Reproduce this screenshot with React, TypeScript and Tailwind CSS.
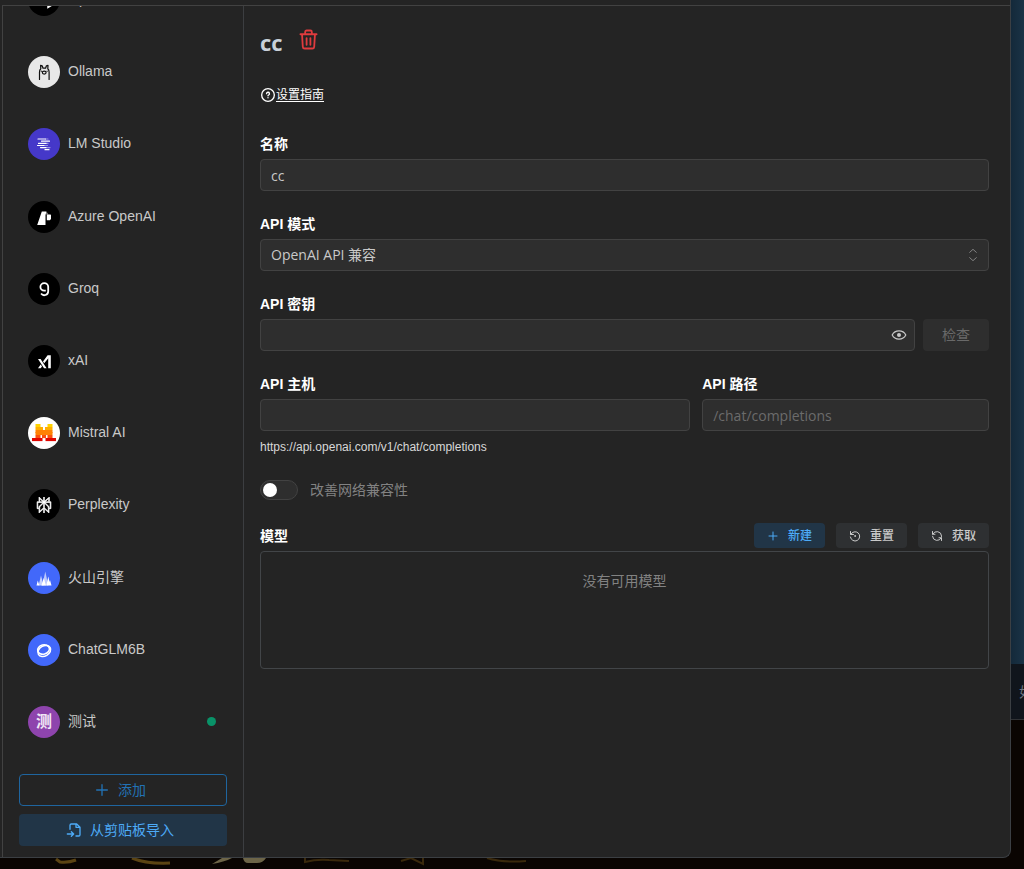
import type { ReactNode } from 'react';
import { SiPerplexity } from 'react-icons/si';

const UI_FONT = "font-['Open_Sans','Noto_Sans_CJK_SC',sans-serif]";
const FIELD =
  "h-8 w-full rounded border border-[#424242] bg-[#2e2e2e] px-2.5 text-sm text-[#c9c9c9] placeholder:text-[#6b6b6b] outline-none focus:border-[#1971c2] font-['Open_Sans','Noto_Sans_CJK_SC',sans-serif]";

type IconProps = { className?: string; children: ReactNode; strokeWidth?: number };

function Stroke({ className, children, strokeWidth = 2 }: IconProps) {
  return (
    <svg
      viewBox="0 0 24 24"
      fill="none"
      stroke="currentColor"
      strokeWidth={strokeWidth}
      strokeLinecap="round"
      strokeLinejoin="round"
      className={className}
      aria-hidden="true"
    >
      {children}
    </svg>
  );
}

const PlusIcon = ({ className }: { className?: string }) => (
  <Stroke className={className}>
    <path d="M12 4v16M4 12h16" />
  </Stroke>
);

function Glyph({ children }: { children: ReactNode }) {
  return (
    <svg viewBox="0 0 32 32" className="size-8" aria-hidden="true">
      {children}
    </svg>
  );
}

const OllamaGlyph = () => (
  <Glyph>
    <g fill="none" stroke="#111" strokeWidth="1.2" strokeLinecap="round" strokeLinejoin="round">
      <path d="M11.500 23.500v-7.500q0-2 1.300-3.200L12.600 9.400l1.600.4.800 2.400h2.600l.8-2.400 1.600-.4-.2 3.400q1.300 1.200 1.300 3.200v7.500" />
      <ellipse cx="16.200" cy="16.600" rx="1.900" ry="1.500" />
      <path d="M13.300 15.200v.1M19.100 15.200v.1" />
    </g>
  </Glyph>
);

const LmStudioGlyph = () => (
  <Glyph>
    <g stroke="#fff" strokeWidth="1.200" strokeLinecap="round">
      <path d="M10 11h7.500M13.500 13.200h8M10.500 15.400h7.500M9.500 17.500h6.500M12.500 19.600h5.500M17 21.700h4" />
      <path d="M17.500 11h2.500M18 15.400h2M16 17.500h3.500M18 19.600h4" opacity=".45" />
    </g>
  </Glyph>
);

const AzureGlyph = () => (
  <Glyph>
    <path d="M13.800 10.500h4.600l-.9 3.500v10H9.200z" fill="#fff" />
    <path d="M18.400 10.500l2.200 3h-3.100z" fill="#fff" opacity=".5" />
    <path d="M18.800 13.500h3.200c.6 0 1 .4 1 1v3.400l-1.200 1.300h-3z" fill="#fff" />
  </Glyph>
);

const GroqGlyph = () => (
  <Glyph>
    <path
      d="M20.200 13.800v4.400a3.900 3.900 0 0 1-7.100 2.300M20.200 13.800a3.900 3.700 0 1 0-3.900 3.800h1.500"
      fill="none"
      stroke="#fff"
      strokeWidth="1.800"
    />
  </Glyph>
);

const XaiGlyph = () => (
  <Glyph>
    <path
      d="M10 14h2.600l6 9.300H16zM22.800 10.200v13.100h-2.600V13.600zM10 23.300l2.700-3.900 1.300 2-1.300 1.900zM15 16.500l4.600-6.300h3.200L16.200 18.300z"
      fill="#fff"
    />
  </Glyph>
);

const MISTRAL_ROWS: [string, number, number, number][] = [
  ['#ffd400', 7.5, 7, 5],
  ['#ffd400', 19.5, 7, 5],
  ['#ffaf00', 7.5, 10, 7.5],
  ['#ffaf00', 17, 10, 7.5],
  ['#ff8205', 7.5, 13, 17],
  ['#ff8205', 7.5, 15, 17],
  ['#fa500f', 7.5, 18, 5],
  ['#fa500f', 14, 18, 4],
  ['#fa500f', 19.5, 18, 5],
  ['#e10500', 4, 21, 10.5],
  ['#e10500', 17.5, 21, 10.5],
];

const MistralGlyph = () => (
  <Glyph>
    {MISTRAL_ROWS.map(([fill, x, y, width]) => (
      <rect key={`${x}-${y}`} x={x} y={y} width={width} height="3.1" fill={fill} />
    ))}
  </Glyph>
);

const VolcanoGlyph = () => (
  <Glyph>
    <path d="M17.300 9.500l3 14h-6z" fill="#fff" opacity=".65" />
    <path d="M13 13.500l2.600 10h-5z" fill="#fff" opacity=".7" />
    <path d="M9.800 18.500l1.600 5H8.500zM15.800 16l2.200 7.500h-4.600z" fill="#fff" />
    <path d="M20.300 14.500l2 9h-4zM22 18l1.500 5.500H20.800z" fill="#fff" />
  </Glyph>
);

const GlmGlyph = () => (
  <Glyph>
    <g fill="none" stroke="#fff" strokeWidth="1.500">
      <ellipse cx="15.500" cy="15.500" rx="6" ry="4.600" transform="rotate(-15 15.500 15.500)" />
      <ellipse cx="16.300" cy="17" rx="6.800" ry="5" transform="rotate(-30 16.300 17)" />
    </g>
  </Glyph>
);

const OpenRouterGlyph = () => (
  <Glyph>
    <path d="M8 16h5l5 5h5M20 18.500l4 2.500-4 2.500zM13 16l5-5h5" fill="#fff" stroke="#fff" strokeWidth="1.500" />
  </Glyph>
);

type Provider = { name: string; bg: string; icon: ReactNode; active?: boolean };

const PROVIDERS: Provider[] = [
  { name: 'Ollama', bg: 'bg-[#e8e8e8]', icon: <OllamaGlyph /> },
  { name: 'LM Studio', bg: 'bg-[#4538c9]', icon: <LmStudioGlyph /> },
  { name: 'Azure OpenAI', bg: 'bg-black', icon: <AzureGlyph /> },
  { name: 'Groq', bg: 'bg-black', icon: <GroqGlyph /> },
  { name: 'xAI', bg: 'bg-black', icon: <XaiGlyph /> },
  { name: 'Mistral AI', bg: 'bg-white', icon: <MistralGlyph /> },
  { name: 'Perplexity', bg: 'bg-black', icon: <SiPerplexity className="size-4 stroke-white stroke-1 text-white" /> },
  { name: '火山引擎', bg: 'bg-[#4268fa]', icon: <VolcanoGlyph /> },
  { name: 'ChatGLM6B', bg: 'bg-[#4268fa]', icon: <GlmGlyph /> },
  {
    name: '测试',
    bg: 'bg-[#8e44ad]',
    icon: <span className="text-base font-bold text-[#f0e6f5]">测</span>,
    active: true,
  },
];

function ProviderItem({ name, bg, icon, active }: Provider) {
  return (
    <a href="#" className="flex w-full items-center gap-2 pr-[11px] pl-[9px]">
      <span className={`flex size-8 shrink-0 items-center justify-center overflow-hidden rounded-full ${bg}`}>{icon}</span>
      <span className="grow pb-0.5 text-sm text-[#c9c9c9]">{name}</span>
      {active && <span className="size-[9px] rounded-full bg-[#099268]" />}
    </a>
  );
}

function Sidebar() {
  return (
    <aside className="flex w-[241px] shrink-0 flex-col border-r border-[#3c3e41] px-4 pb-[11px]">
      <ul className="flex grow flex-col">
        <li className="flex h-[30px] items-end overflow-hidden pb-5">
          <ProviderItem name="OpenRouter" bg="bg-black" icon={<OpenRouterGlyph />} />
        </li>
        {PROVIDERS.map((p) => (
          <li key={p.name} className="flex min-h-12 flex-1 items-center">
            <ProviderItem {...p} />
          </li>
        ))}
      </ul>
      <div className={`mt-4 flex flex-col gap-2 text-sm ${UI_FONT}`}>
        <button className="flex h-8 items-center justify-center gap-2 rounded border border-[#1f659f] pr-1.5 text-[#2272b4]">
          <PlusIcon className="size-4" />
          添加
        </button>
        <button className="flex h-8 items-center justify-center gap-2 rounded bg-[#213547] pr-1.5 text-[#4dabf7]">
          <Stroke className="size-4" strokeWidth={2}>
            <path d="M6 11V5a2 2 0 0 1 2-2h8l5 5v11a2 2 0 0 1-2 2h-4M15 3v5h6M2 18h9M8 14.500l3.500 3.500L8 21.500" />
          </Stroke>
          从剪贴板导入
        </button>
      </div>
    </aside>
  );
}

function Field({ id, label, children }: { id: string; label: string; children: ReactNode }) {
  return (
    <div className="flex flex-col gap-1">
      <label htmlFor={id} className="h-[22px] text-sm leading-[22px] font-bold text-white">
        {label}
      </label>
      {children}
    </div>
  );
}

function SmallButton({ tone, icon, children }: { tone: string; icon: ReactNode; children: ReactNode }) {
  return (
    <button className={`flex h-[25px] items-center gap-[9px] rounded px-[13px] text-xs font-medium ${UI_FONT} ${tone}`}>
      {icon}
      {children}
    </button>
  );
}

function Settings() {
  return (
    <main className="flex grow flex-col pt-5 pr-[21px] pl-4">
      <header className="flex h-8 items-center gap-4">
        <h1 className={`text-[22px] leading-8 font-bold text-[#c9d1d9] ${UI_FONT}`}>cc</h1>
        <button aria-label="删除" className="pb-1.5 text-[#e03b3e]">
          <svg
            viewBox="0 0 20 22"
            fill="none"
            stroke="currentColor"
            strokeWidth="1.900"
            strokeLinecap="round"
            strokeLinejoin="round"
            className="h-[21px] w-[19px]"
            aria-hidden="true"
          >
            <path d="M1.500 5.500h17M3.200 5.500l.8 13.200a2 2 0 0 0 2 1.800h8a2 2 0 0 0 2-1.800l.8-13.200M6.500 5.200V3a1.500 1.500 0 0 1 1.500-1.500h4A1.500 1.500 0 0 1 13.500 3v2.200M8 9.500v7M12 9.500v7" />
          </svg>
        </button>
      </header>

      <a href="#" className={`mt-[27px] flex h-5 items-center self-start text-xs text-white ${UI_FONT}`}>
        <Stroke className="size-4" strokeWidth={2}>
          <circle cx="12" cy="12" r="9.500" />
          <path d="M9.800 10a2.200 2.200 0 1 1 3.200 2q-1 .500-1 1.300M12 16v.2" />
        </Stroke>
        <span className="underline underline-offset-2">设置指南</span>
      </a>

      <form className="mt-7 flex flex-col gap-[22px]" onSubmit={(e) => e.preventDefault()}>
        <Field id="name" label="名称">
          <input id="name" className={FIELD} defaultValue="cc" />
        </Field>

        <Field id="mode" label="API 模式">
          <div className="relative">
            <select id="mode" className={`${FIELD} appearance-none`}>
              <option>OpenAI API 兼容</option>
            </select>
            <Stroke className="pointer-events-none absolute top-2 right-2 size-4 text-[#828282]" strokeWidth={1.5}>
              <path d="M7 8l5-4.500L17 8M7 16l5 4.500L17 16" />
            </Stroke>
          </div>
        </Field>

        <Field id="key" label="API 密钥">
          <div className="flex gap-2">
            <div className="relative grow">
              <input id="key" type="password" className={`${FIELD} pr-8`} />
              <button type="button" aria-label="显示密钥" className="absolute top-2 right-2 text-[#c9c9c9]">
                <svg viewBox="0 0 16 16" fill="none" className="size-4" aria-hidden="true">
                  <path
                    d="M1.200 8C2.600 5.200 5 3.900 8 3.900S13.400 5.200 14.800 8C13.400 10.800 11 12.100 8 12.100S2.600 10.800 1.200 8z"
                    stroke="currentColor"
                    strokeWidth="1.200"
                  />
                  <circle cx="8" cy="8" r="2" fill="currentColor" />
                </svg>
              </button>
            </div>
            <button type="button" disabled className={`h-8 w-[66px] rounded bg-[#2e2e2e] text-sm text-[#696969] ${UI_FONT}`}>
              检查
            </button>
          </div>
        </Field>

        <div className="grid grid-cols-[3fr_2fr] gap-3">
          <Field id="host" label="API 主机">
            <input id="host" className={FIELD} />
          </Field>
          <Field id="path" label="API 路径">
            <input id="path" className={FIELD} placeholder="/chat/completions" />
          </Field>
        </div>
      </form>

      <p className="mt-1.5 text-xs leading-5 text-[#d8d8d8]">https://api.openai.com/v1/chat/completions</p>

      <label className={`mt-[23px] flex h-5 items-center gap-3 text-sm text-[#828282] ${UI_FONT}`}>
        <input
          type="checkbox"
          role="switch"
          className="flex h-5 w-[38px] appearance-none items-center rounded-full border border-[#424242] bg-[#2e2e2e] px-0.5 before:size-3.5 before:rounded-full before:bg-white checked:justify-end checked:bg-[#1971c2]"
        />
        改善网络兼容性
      </label>

      <div className="mt-[23px] flex items-center justify-between">
        <h2 className="text-sm font-bold text-white">模型</h2>
        <div className="flex gap-[11px]">
          <SmallButton tone="bg-[#213547] text-[#4dabf7]" icon={<PlusIcon className="size-3" />}>
            新建
          </SmallButton>
          <SmallButton
            tone="bg-[#2e3032] text-[#c9c9c9]"
            icon={
              <Stroke className="size-3">
                <path d="M3 3v6h6M3.500 9a9.300 9.300 0 1 1-.7 5" />
                <circle cx="12" cy="12" r="1" />
              </Stroke>
            }
          >
            重置
          </SmallButton>
          <SmallButton
            tone="bg-[#2e3032] text-[#c9c9c9]"
            icon={
              <Stroke className="size-3">
                <path d="M3 3v5.500h5M3.500 8.500A9.200 9.200 0 0 1 21 12v1M21 21v-5.500h-5M20.500 15.500A9.200 9.200 0 0 1 3 12.500" />
              </Stroke>
            }
          >
            获取
          </SmallButton>
        </div>
      </div>

      <section
        className={`mt-[3px] h-[118px] rounded border border-[#424548] pt-[17px] text-center text-sm leading-6 text-[#828282] ${UI_FONT}`}
      >
        没有可用模型
      </section>
    </main>
  );
}

function Backdrop() {
  return (
    <div className="absolute inset-0 flex flex-col overflow-hidden bg-[#0a0502]" aria-hidden="true">
      <div className="h-[664px] bg-linear-to-l from-[#1a3346] from-0% to-[#132839] to-[14px]" />
      <div className="flex h-14 items-center justify-end border-b border-[#303235] bg-[#10151c]">
        <span className="-mr-[9px] text-sm text-[#6e7681]">如</span>
      </div>
      <div className="grow" />
      <svg viewBox="0 0 640 11" className="h-[11px] w-[640px]">
        <g fill="none" stroke="#5b4413" strokeWidth="2">
          <path d="M56 1l4 3q8 1 16-2" strokeWidth="3" />
          <path d="M132 0q14 6 38 5" strokeWidth="3" />
          <path d="M305 0v4q12-3 24-2l20 1" stroke="#3a290c" />
          <path d="M401 3l10-3 12 6V0" stroke="#3a290c" />
          <path d="M487 0q16 5 39 3" stroke="#3a290c" />
        </g>
        <path d="M212 6q12-2 20-6h-10zM243 0h23q-3 5-9 5h-9q-4 0-5-5z" fill="#6d6548" />
      </svg>
    </div>
  );
}

export default function App() {
  return (
    <div className="relative flex min-h-screen pr-[13px] pb-[11px] font-['Liberation_Sans','Noto_Sans_CJK_SC',sans-serif]">
      <Backdrop />
      <div className="relative flex grow flex-col rounded-br-lg border-r border-b border-[#3b3f43] bg-[#242424] pl-0.5">
        <div className="h-[5px]" />
        <div className="flex grow border-t border-l border-[#424242]">
          <Sidebar />
          <Settings />
        </div>
      </div>
    </div>
  );
}
